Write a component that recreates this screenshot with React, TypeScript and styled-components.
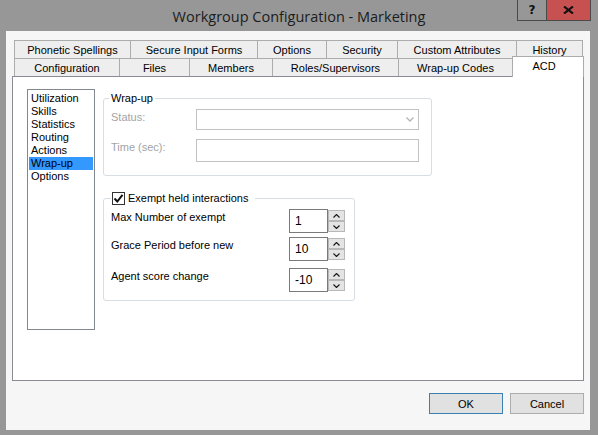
import React from 'react';
import styled, { createGlobalStyle } from 'styled-components';

const GlobalStyle = createGlobalStyle`
  html, body {
    margin: 0;
    padding: 0;
  }
  body {
    width: 598px;
    height: 435px;
    overflow: hidden;
    font-family: 'Liberation Sans', Arial, sans-serif;
    font-size: 11px;
    color: #000;
  }
  * {
    box-sizing: border-box;
  }
`;

const row1 = [
    {label: 'Phonetic Spellings', width: 117},
    {label: 'Secure Input Forms', width: 128},
    {label: 'Options', width: 70},
    {label: 'Security', width: 72},
    {label: 'Custom Attributes', width: 120},
    {label: 'History', width: 67},
];

const row2 = [
    {label: 'Configuration', width: 106},
    {label: 'Files', width: 71},
    {label: 'Members', width: 84},
    {label: 'Roles/Supervisors', width: 127},
    {label: 'Wrap-up Codes', width: 115},
];

const sections = ['Utilization', 'Skills', 'Statistics', 'Routing', 'Actions', 'Wrap-up', 'Options'];

const spins = [
    {label: 'Max Number of exempt', value: '1', top: 4},
    {label: 'Grace Period before new', value: '10', top: 4},
    {label: 'Agent score change', value: '-10', top: 7},
];

const Caret = ({down}: { down?: boolean }) => (
    <svg width="7" height="4" viewBox="0 0 7 4">
        <polyline
            points={down ? '0.5,0.5 3.5,3.5 6.5,0.5' : '0.5,3.5 3.5,0.5 6.5,3.5'}
            fill="none"
            stroke="#1a1a1a"
            strokeWidth="1.2"
        />
    </svg>
);

export default function App() {
    return (
        <>
            <GlobalStyle/>
            <Window>
                <TitleBar>
                    <span/>
                    <Title>Workgroup Configuration - Marketing</Title>
                    <Caption>
                        <HelpButton>?</HelpButton>
                        <CloseButton>
                            <svg width="11" height="8" viewBox="0 0 11 8">
                                <path d="M1 0.5 L10 7.5 M10 0.5 L1 7.5" stroke="#111" strokeWidth="2.2"/>
                            </svg>
                        </CloseButton>
                    </Caption>
                </TitleBar>

                <Client>
                    <TabStrip>
                        <TabRow>
                            {row1.map(t => <Tab key={t.label} $width={t.width}>{t.label}</Tab>)}
                        </TabRow>
                        <TabRow>
                            {row2.map(t => <Tab key={t.label} $width={t.width}>{t.label}</Tab>)}
                            <ActiveTab>ACD</ActiveTab>
                        </TabRow>
                    </TabStrip>

                    <Panel>
                        <ListBox>
                            {sections.map(s => (
                                <ListItem key={s} $selected={s === 'Wrap-up'}>{s}</ListItem>
                            ))}
                        </ListBox>

                        <Groups>
                            <Group $width={329}>
                                <Legend>Wrap-up</Legend>
                                <FieldGrid>
                                    <DimLabel>Status:</DimLabel>
                                    <Combo>
                                        <svg width="8" height="5" viewBox="0 0 8 5">
                                            <polyline points="0.5,0.5 4,4 7.5,0.5" fill="none" stroke="#b5b5b5"
                                                      strokeWidth="1.4"/>
                                        </svg>
                                    </Combo>
                                    <DimLabel>Time (sec):</DimLabel>
                                    <TextBox/>
                                </FieldGrid>
                            </Group>

                            <Group $width={252} $top={16} $bottom={8} $right={9}>
                                <CheckLegend>
                                    <CheckBox>
                                        <svg width="11" height="11" viewBox="0 0 11 11">
                                            <path d="M1.5 5.5 L4.3 8.5 L9.5 1.8" fill="none" stroke="#111"
                                                  strokeWidth="2"/>
                                        </svg>
                                    </CheckBox>
                                    Exempt held interactions
                                </CheckLegend>
                                {spins.map(s => (
                                    <SpinRow key={s.label} $top={s.top}>
                                        <SpinLabel>{s.label}</SpinLabel>
                                        <Spin>
                                            <SpinValue>{s.value}</SpinValue>
                                            <SpinButtons>
                                                <SpinButton><Caret/></SpinButton>
                                                <SpinButton><Caret down/></SpinButton>
                                            </SpinButtons>
                                        </Spin>
                                    </SpinRow>
                                ))}
                            </Group>
                        </Groups>
                    </Panel>

                    <ButtonBar>
                        <DialogButton $primary>OK</DialogButton>
                        <DialogButton>Cancel</DialogButton>
                    </ButtonBar>
                </Client>
            </Window>
        </>
    );
}

const Window = styled.div`
    width: 598px;
    height: 435px;
    background-color: #979797;
    display: flex;
    flex-direction: column;
`

const TitleBar = styled.div`
    height: 31px;
    flex-shrink: 0;
    display: grid;
    grid-template-columns: 1fr auto 1fr;
`

const Title = styled.div`
    font-family: 'Open Sans', 'Noto Sans', sans-serif;
    font-size: 14.5px;
    color: #1c1c1c;
    padding-top: 6px;
    line-height: 21px;
    white-space: nowrap;
`

const Caption = styled.div`
    justify-self: end;
    align-self: start;
    display: flex;
    margin-right: 7px;
`

const HelpButton = styled.div`
    width: 29px;
    height: 21px;
    border-left: 1px solid #4a4a4a;
    border-bottom: 1px solid #4a4a4a;
    display: flex;
    align-items: center;
    justify-content: center;
    font-family: 'DejaVu Sans', sans-serif;
    font-weight: 700;
    font-size: 12px;
    color: #111;
`

const CloseButton = styled.div`
    width: 45px;
    height: 21px;
    background-color: #c75050;
    border: 1px solid #4a4a4a;
    border-top: none;
    display: flex;
    align-items: center;
    justify-content: center;
`

const Client = styled.div`
    flex: 1;
    margin: 0 8px 5px 6px;
    background-color: #f6f6f6;
    display: flex;
    flex-direction: column;
`

const TabStrip = styled.div`
    margin: 9px 0 0 8px;
`

const TabRow = styled.div`
    display: flex;
    height: 18px;
`

const Tab = styled.div<{ $width: number }>`
    width: ${p => p.$width}px;
    height: 18px;
    border: 1px solid #acacac;
    border-bottom: none;
    background-color: #eeeeee;
    display: flex;
    align-items: center;
    justify-content: center;
    white-space: nowrap;

    & + & {
        margin-left: -1px;
    }
`

const ActiveTab = styled.div`
    position: relative;
    z-index: 1;
    width: 72px;
    height: 21px;
    margin: -2px 0 0 -1px;
    border: 1px solid #acacac;
    border-bottom: none;
    background-color: #fff;
    display: flex;
    justify-content: center;
    padding: 3px 8px 0 0;
`

const Panel = styled.div`
    margin-left: 6px;
    width: 572px;
    height: 305px;
    border: 1px solid #8b8b96;
    background-color: #fff;
    display: flex;
    align-items: flex-start;
    padding: 12px 0 0 14px;
`

const ListBox = styled.div`
    width: 68px;
    height: 241px;
    border: 1px solid #828790;
    padding-top: 2px;
    margin-right: 8px;
`

const ListItem = styled.div<{ $selected?: boolean }>`
    height: 13px;
    line-height: 13px;
    margin: 0 1px;
    padding-left: 2px;
    background-color: ${p => p.$selected ? '#3399ff' : 'transparent'};
`

const Groups = styled.div`
    display: flex;
    flex-direction: column;
    align-items: flex-start;
    padding-top: 3px;
`

const Group = styled.fieldset<{ $width: number; $top?: number; $bottom?: number; $right?: number }>`
    width: ${p => p.$width}px;
    margin: ${p => p.$top ?? 0}px 0 0 0;
    padding: 0 ${p => p.$right ?? 12}px ${p => p.$bottom ?? 13}px 7px;
    border: 1px solid #d6dde3;
    border-radius: 3px;
    min-width: 0;
`

const Legend = styled.legend`
    padding: 0 2px;
    margin-left: -2px;
    line-height: 13px;
`

const CheckLegend = styled.legend`
    padding: 0 7px 0 1px;
    line-height: 13px;
    display: flex;
    align-items: center;
    gap: 3px;
`

const CheckBox = styled.span`
    width: 13px;
    height: 13px;
    border: 1px solid #333;
    background-color: #fff;
    display: inline-flex;
    align-items: center;
    justify-content: center;
`

const FieldGrid = styled.div`
    display: grid;
    grid-template-columns: 85px 223px;
    row-gap: 9px;
    align-items: start;
    margin-top: 4px;
`

const DimLabel = styled.div`
    color: #a3a3a3;
    padding-top: 2px;
    line-height: 13px;
`

const Combo = styled.div`
    height: 21px;
    border: 1px solid #c2c2c2;
    background-color: #fff;
    display: flex;
    align-items: center;
    justify-content: flex-end;
    padding-right: 4px;
`

const TextBox = styled.div`
    height: 23px;
    border: 1px solid #c2c2c2;
    background-color: #fff;
`

const SpinRow = styled.div<{ $top: number }>`
    display: flex;
    align-items: flex-start;
    margin-top: ${p => p.$top}px;
`

const SpinLabel = styled.div`
    width: 178px;
    padding-top: 2px;
    line-height: 13px;
`

const Spin = styled.div`
    display: flex;
    height: 24px;
`

const SpinValue = styled.div`
    width: 39px;
    height: 24px;
    border: 1px solid #7a7a7a;
    padding-left: 5px;
    display: flex;
    align-items: center;
    font-size: 12px;
`

const SpinButtons = styled.div`
    width: 17px;
    display: flex;
    flex-direction: column;
    padding: 1px 0;
    gap: 0;
`

const SpinButton = styled.div`
    height: 11px;
    background-color: #e4e4e4;
    border: 1px solid #b8b8b8;
    display: flex;
    align-items: center;
    justify-content: center;
`

const ButtonBar = styled.div`
    display: flex;
    justify-content: flex-end;
    gap: 7px;
    margin-top: 12px;
    padding-right: 6px;
`

const DialogButton = styled.div<{ $primary?: boolean }>`
    width: 74px;
    height: 21px;
    background-color: #e1e1e1;
    border: 1px solid ${p => p.$primary ? '#3c7fb1' : '#adadad'};
    display: flex;
    align-items: center;
    justify-content: center;
`
